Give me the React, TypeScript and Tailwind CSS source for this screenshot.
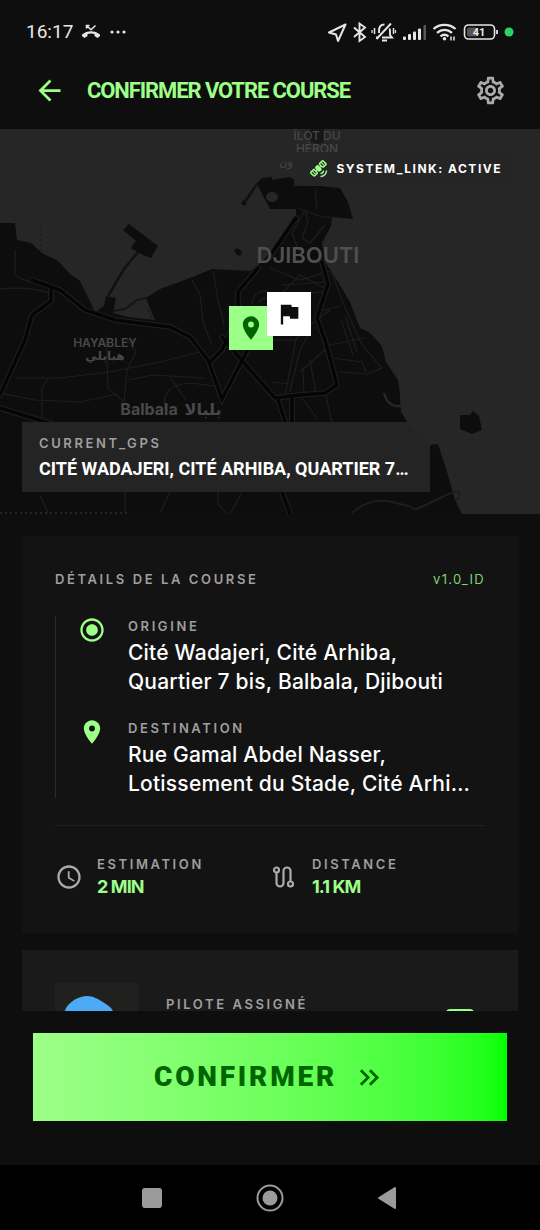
import {
  MdArrowBack,
  MdFlag,
  MdKeyboardDoubleArrowRight,
  MdLocationOn,
  MdOutlineSettings,
  MdRadioButtonChecked,
  MdSatelliteAlt,
  MdSchedule,
} from 'react-icons/md';

const labelClass = 'font-["Inter",sans-serif] text-[13px] leading-5 font-semibold tracking-[0.2em] text-[#a09e9e] uppercase';

const stops = [
  {
    key: 'origin',
    label: 'Origine',
    address: 'Cité Wadajeri, Cité Arhiba, Quartier 7 bis, Balbala, Djibouti',
    icon: <MdRadioButtonChecked size={28} />,
  },
  {
    key: 'destination',
    label: 'Destination',
    address: 'Rue Gamal Abdel Nasser, Lotissement du Stade, Cité Arhi…',
    icon: <MdLocationOn size={28} />,
  },
];

function StatusBar() {
  return (
    <div className="flex h-16 shrink-0 items-center justify-between pr-6 pl-[26px] text-[#e6e6e6]">
      <div className="flex items-center gap-2">
        <span className="font-['Roboto',sans-serif] text-[19px]">16:17</span>
        <svg width="20" height="16" viewBox="0 0 20 16" fill="none">
          <path d="M1 10.5C6 6 14 6 19 10.5V12l-2.500 2-3-2v-2c-2.200-.800-4.800-.800-7 0v2l-3 2L1 12z" fill="currentColor" />
          <path d="M5.500 4.500V1.500H8.500M6 2l4 3.800L14.500 1.500" stroke="currentColor" strokeWidth="1.500" />
        </svg>
        <svg width="18" height="4" viewBox="0 0 18 4" fill="currentColor">
          <circle cx="3" cy="2" r="1.600" />
          <circle cx="9" cy="2" r="1.600" />
          <circle cx="15" cy="2" r="1.600" />
        </svg>
      </div>
      <svg width="190" height="24" viewBox="326 20 190 24" fill="none" stroke="currentColor" strokeWidth="2">
        <path d="M345.500 24.500L329 32.500L336 34.500L338 41z" strokeLinejoin="round" />
        <path d="M354 27.500L365 37L359.500 41V23.500L365 27.500L354 37" strokeWidth="1.900" />
        {/* vibrating bell, crossed out */}
        <path d="M379 33V31c0-4 2-6.500 5.500-6.500M389.500 28.500c.400 1 .500 2 .500 3v3.500l2 2.500H382M376 37.500h3M391 23.500L376.500 39" strokeWidth="1.900" />
        <path d="M382 40.500h5" strokeWidth="2" />
        <path d="M374.500 28v6M393.500 28v6" strokeWidth="1.500" />
        <path d="M372 30v3M395.500 30v3" strokeWidth="1.200" />
        <g fill="currentColor" stroke="none">
          <rect x="403" y="36.500" width="3" height="3.500" rx="1" />
          <rect x="408" y="34" width="3" height="6" rx="1" />
          <rect x="413" y="31.500" width="3" height="8.500" rx="1" />
          <rect x="418" y="28.500" width="3" height="11.500" rx="1" />
          <rect x="423.500" y="25" width="2.500" height="15" rx="1" opacity="0.350" />
        </g>
        <path d="M433.500 29c6-5.500 16-5.500 22 0M437 32.800c4.500-4 10.500-4 15 0M440.500 36.300c2.500-2 5.500-2 8 0" strokeWidth="2.300" />
        <circle cx="444.500" cy="38.800" r="1.800" fill="currentColor" stroke="none" />
        <path d="M451 36.500v4M454 36.500v4" strokeWidth="1.500" />
        <rect x="464.500" y="25" width="30" height="14" rx="4" strokeWidth="1.600" />
        <rect x="467" y="27.500" width="10" height="9" rx="2" fill="#555" stroke="none" />
        <path d="M497 30v4" strokeWidth="1.800" />
        <text x="479" y="36" fill="currentColor" stroke="none" textAnchor="middle" className="font-['Roboto',sans-serif] text-[11px] font-bold">41</text>
        <circle cx="509" cy="32" r="4.500" fill="#2fd064" stroke="none" />
      </svg>
    </div>
  );
}

function CityMap() {
  return (
    <svg className="h-full w-full" viewBox="0 129 540 385" preserveAspectRatio="xMidYMid slice">
      <rect y="129" width="540" height="385" fill="#262626" />
      {/* land */}
      <g fill="#0d0d0d">
        <path d="M0 223H15L17 240L31 243L42 253L58 261L70 274L80 281L88 297L95 312L104 306L106 296L116 298L113 313L128 317L155 320L146 298L160 289L190 278L212 269L250 271L262 262L280 240L296 218V209L270 209L258 186V182L290 177L300 184L340 188L348 202L353 219L332 217L331 226L322 243L325 262L338 282L350 302L360 328L370 333L382 346L386 362L398 380L400 395L401 412L410 426L430 445L438 444L447 472L455 500L462 514H0Z" />
        <path d="M123 230L129 224L158 246L151 258L143 255L139 253L131 248L136 241Z" />
        <path d="M460 415L470 415L473 411L479 416L482 430L472 434L460 429Z" />
        <path d="M234 250l4-2 4 4-2 4-4-2zM256 184l6-6 10-1v14l-10-4z" />
        <circle cx="244" cy="203" r="2.500" />
        <circle cx="317" cy="135" r="9" opacity="0.600" />
      </g>
      <ellipse cx="272" cy="197" rx="6" ry="5" fill="#262626" />
      <path d="M138 252L124 269L108 296M244 203L257 184" stroke="#111" strokeWidth="2.500" fill="none" />
      <path d="M113 311l12-2 12-9 9-2" stroke="#151515" strokeWidth="2" fill="none" />
      <path d="M41 224v26" stroke="#1b1b1b" strokeDasharray="2 3" />
      {/* secondary streets */}
      <g stroke="#1e1e1e" strokeWidth="1.200" fill="none">
        <path d="M0 289Q30 286 52 294M15 250V275Q30 285 50 284M16 378L60 378L110 372L160 362L200 352M0 393L35 400L80 402L118 394M42 422V388L48 379M106 335L108 388L124 402L127 370L136 352L126 338M129 380L152 375L205 378M165 410Q160 385 190 383L215 386M170 377L186 400" />
        <path d="M192 280L200 295L203 322L212 345M213 271L218 300L224 325M152 318L148 308M252 305a12 14 0 0 1 18-12M258 303a8 8 0 0 1 12-3" />
        <path d="M298 208L310 213L322 217H332M315 190L317 209M299 252L292 233L305 210L308 222L302 238L310 243L325 225M270 268L300 280L330 271M275 300L300 275L328 290M330 268L346 310L362 345L382 368L368 374L338 372M295 340L310 325L330 310M320 311L340 306M300 372L330 345L365 338M332 358L362 362L366 372M290 392L300 350L310 332M300 395L318 420M325 393L332 422M303 368L304 395M310 360L316 395" />
        <path d="M276 300L330 290M283 285L327 282M341 320L353 355M345 316L357 352M270 340H296L285 395M272 382L290 384" />
        <path d="M384 393q3 12 12 13h7" strokeWidth="2.500" stroke="#262626" />
        <path d="M352 513Q370 497 392 502T414 509T440 498T457 500" strokeWidth="2" />
        <path d="M160 513l10-21M218 492v12l11 12 12-22M40 495l8 18M125 492v20" />
      </g>
      {/* main roads */}
      <g fill="none" strokeLinecap="round">
        <g stroke="#202020" strokeWidth="5.500">
          <path d="M32 280L60 290L85 310L115 320L170 327L190 337L208 360L222 399L245 355L265 315" />
          <path d="M51 290V301L32 315L25 340L0 395M0 408L52 424M258 268L238 292V318L222 350L210 362" />
          <path d="M222 337L250 370L275 398L300 395L325 393L337 385L325 340L317 318L328 284L322 262M296 218L270 256" />
          <path d="M292 398V424M278 400L286 424M282 492L290 514" />
        </g>
        <g stroke="#050505" strokeWidth="3.500">
          <path d="M32 280L60 290L85 310L115 320L170 327L190 337L208 360L222 399L245 355L265 315" />
          <path d="M51 290V301L32 315L25 340L0 395M0 408L52 424M258 268L238 292V318L222 350L210 362" />
          <path d="M222 337L250 370L275 398L300 395L325 393L337 385L325 340L317 318L328 284L322 262M296 218L270 256" />
          <path d="M292 398V424M278 400L286 424M282 492L290 514" />
        </g>
      </g>
      <path d="M0 513H130" stroke="#262626" strokeWidth="2" strokeDasharray="2 3" />
      {/* place names */}
      <g textAnchor="middle" fill="#484848" className="font-['Inter','DejaVu_Sans',sans-serif] font-medium">
        <text x="317" y="140" className="text-[12px]">ÎLOT DU</text>
        <text x="317" y="153" className="text-[12px]">HÉRON</text>
        <text x="286" y="166" className="text-[11px]">ون</text>
        <text x="308" y="263" fill="#505050" className="text-[22px] font-semibold">DJIBOUTI</text>
        <text x="105" y="347" className="text-[12px] font-semibold">HAYABLEY</text>
        <text x="105" y="360" className="text-[12px] font-bold">هبابلي</text>
        <text x="149" y="415" className="text-[16px] font-bold">Balbala</text>
        <text x="203" y="415" className="text-[16px] font-bold">بلبالا</text>
      </g>
    </svg>
  );
}

function RouteIcon() {
  return (
    <svg width="28" height="28" viewBox="0 0 28 28" fill="none" stroke="currentColor" strokeWidth="2.200" className="shrink-0">
      <circle cx="6.500" cy="7" r="2.500" />
      <circle cx="20.500" cy="21" r="2.500" />
      <path d="M6.500 9.500V20a3.500 3.500 0 0 0 7 0V8a3.500 3.500 0 0 1 7 0v10.500" />
    </svg>
  );
}

export default function App() {
  return (
    <div className="flex h-screen flex-col bg-[#0e0e0e] font-['Inter',sans-serif] text-white">
      <StatusBar />

      <header className="flex shrink-0 items-center px-[33px] pt-2.5 pb-[22px] text-[#9cff87]">
        <button type="button" aria-label="Retour">
          <MdArrowBack size={33} />
        </button>
        <h1 className="ml-[21px] flex-1 font-['Roboto',sans-serif] text-[22px] leading-6 font-bold tracking-tighter whitespace-nowrap">
          CONFIRMER VOTRE COURSE
        </h1>
        <button type="button" aria-label="Paramètres" className="text-[#adaaaa]">
          <MdOutlineSettings size={33} />
        </button>
      </header>

      <main className="min-h-0 flex-1 overflow-y-auto [scrollbar-width:none]">
        <section className="relative h-[385px] overflow-hidden">
          <CityMap />
          <div className="absolute top-[177px] left-1/2 -ml-[41px] flex size-11 items-center justify-center bg-[#9cff87] text-[#006400]">
            <MdLocationOn size={28} />
          </div>
          <div className="absolute top-[163px] left-1/2 -ml-[3px] flex size-11 items-center justify-center bg-white text-[#0e0e0e]">
            <MdFlag size={28} />
          </div>
          <div className="absolute top-[23px] right-[22px] flex items-center gap-2 bg-[#262626]/90 px-4 py-2">
            <MdSatelliteAlt size={18} className="text-[#9cff87]" />
            <span className="text-xs leading-[18px] font-bold tracking-[0.125em]">SYSTEM_LINK: ACTIVE</span>
          </div>
          <div className="absolute bottom-[22px] left-[22px] w-[408px] max-w-[80%] bg-[#262626]/95 px-[17px] py-[11px]">
            <p className={labelClass}>CURRENT_GPS</p>
            <p className="mt-1 truncate font-['Roboto',sans-serif] text-lg leading-6 font-bold">CITÉ WADAJERI, CITÉ ARHIBA, QUARTIER 7…</p>
          </div>
        </section>

        <div className="flex flex-col gap-[17px] px-[22px] pt-[22px]">
          <section className="bg-[#131313] p-[33px]">
            <div className="flex items-center justify-between">
              <h2 className={labelClass}>Détails de la course</h2>
              <span className="text-[13px] leading-5 tracking-widest text-[#7fd070]">v1.0_ID</span>
            </div>

            <ul className="mt-[27px] flex flex-col gap-[22px] border-l border-[#2a2a2a] pl-[22px]">
              {stops.map((s) => (
                <li key={s.key} className="flex gap-[22px]">
                  <span className="shrink-0 text-[#9cff87]">{s.icon}</span>
                  <div className="min-w-0 pr-2">
                    <p className={labelClass}>{s.label}</p>
                    <p className="mt-0.5 line-clamp-2 text-[21px] leading-[29px] font-medium tracking-[0.01em]">{s.address}</p>
                  </div>
                </li>
              ))}
            </ul>

            <div className="mt-[27px] grid grid-cols-2 border-t border-[#1f1f1f] pt-7">
              <div className="flex items-center gap-[14px]">
                <MdSchedule size={28} className="shrink-0 text-[#adaaaa]" />
                <div>
                  <p className={labelClass}>Estimation</p>
                  <p className="text-lg leading-[26px] font-bold tracking-tighter text-[#9cff87]">2 MIN</p>
                </div>
              </div>
              <div className="flex items-center gap-[14px]">
                <span className="text-[#adaaaa]"><RouteIcon /></span>
                <div>
                  <p className={labelClass}>Distance</p>
                  <p className="text-lg leading-[26px] font-bold tracking-tighter text-[#9cff87]">1.1 KM</p>
                </div>
              </div>
            </div>
          </section>

          <section className="flex h-[149px] items-start bg-[#1a1a1a] p-[33px]">
            <div className="size-[83px] shrink-0 overflow-hidden bg-[#20201e]">
              <svg viewBox="0 0 83 83">
                <path d="M9 30C12 19 24 13 32 13C38 13 43 16 48 19C54 23 58 25 59 32L60 60H9Z" fill="#4dabf5" />
              </svg>
            </div>
            <p className={`${labelClass} mt-[11px] ml-7 flex-1`}>Pilote assigné</p>
            <button type="button" aria-label="Message" className="mt-[26px] mr-[11px] h-[22px] w-7 rounded-sm border-2 border-[#9cff87]" />
          </section>
        </div>
      </main>

      <footer className="shrink-0 px-[33px] pt-[22px] pb-11">
        <button
          type="button"
          className="flex h-[88px] w-full items-center justify-center gap-4 bg-linear-to-r from-[#9cff87] to-[#00ff00] text-[#006400]"
        >
          <span className="font-['Roboto',sans-serif] text-[28px] leading-8 font-black tracking-widest">CONFIRMER</span>
          <MdKeyboardDoubleArrowRight size={33} />
        </button>
      </footer>

      <nav className="flex h-[65px] shrink-0 items-center justify-center gap-[90px] bg-black text-[#9b9b9b]">
        <button type="button" aria-label="Applications récentes">
          <svg width="28" height="28" viewBox="0 0 28 28" fill="currentColor">
            <rect x="4" y="4" width="20" height="20" rx="3" />
          </svg>
        </button>
        <button type="button" aria-label="Accueil">
          <svg width="28" height="28" viewBox="0 0 28 28" fill="currentColor">
            <circle cx="14" cy="14" r="12.500" fill="none" stroke="currentColor" strokeWidth="2" />
            <circle cx="14" cy="14" r="7.500" />
          </svg>
        </button>
        <button type="button" aria-label="Précédent">
          <svg width="28" height="28" viewBox="0 0 28 28" fill="currentColor" stroke="currentColor" strokeWidth="2" strokeLinejoin="round">
            <path d="M5 14L21 4V24Z" />
          </svg>
        </button>
      </nav>
    </div>
  );
}
